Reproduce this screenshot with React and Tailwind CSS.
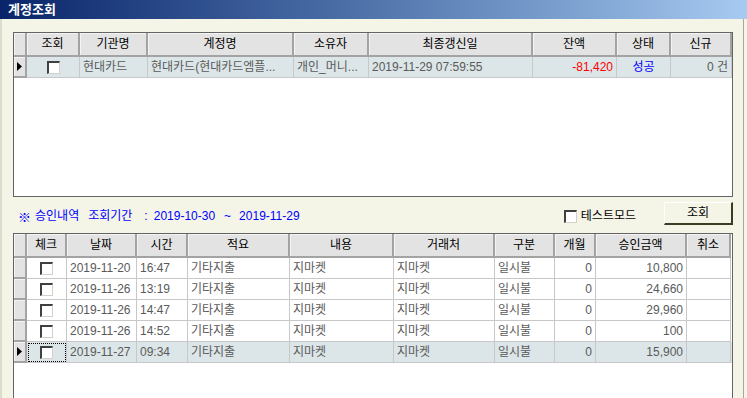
import React from 'react'

const FONT = { fontFamily: '"Liberation Sans", "Noto Sans CJK KR", sans-serif' }

const TOP_COLS = [
  { w: 53, label: '조회', align: 'center' },
  { w: 68, label: '기관명', align: 'left' },
  { w: 146, label: '계정명', align: 'left' },
  { w: 75, label: '소유자', align: 'left' },
  { w: 164, label: '최종갱신일', align: 'left' },
  { w: 84, label: '잔액', align: 'right' },
  { w: 54, label: '상태', align: 'center' },
  { w: 61, label: '신규', align: 'right' },
]

const BOTTOM_COLS = [
  { w: 40, label: '체크', align: 'center' },
  { w: 70, label: '날짜', align: 'left' },
  { w: 51, label: '시간', align: 'left' },
  { w: 102, label: '적요', align: 'left' },
  { w: 104, label: '내용', align: 'left' },
  { w: 101, label: '거래처', align: 'left' },
  { w: 60, label: '구분', align: 'left' },
  { w: 41, label: '개월', align: 'right' },
  { w: 91, label: '승인금액', align: 'right' },
  { w: 44, label: '취소', align: 'left' },
]

const ROWS = [
  ['2019-11-20', '16:47', '기타지출', '지마켓', '지마켓', '일시불', '0', '10,800', ''],
  ['2019-11-26', '13:19', '기타지출', '지마켓', '지마켓', '일시불', '0', '24,660', ''],
  ['2019-11-26', '14:47', '기타지출', '지마켓', '지마켓', '일시불', '0', '29,960', ''],
  ['2019-11-26', '14:52', '기타지출', '지마켓', '지마켓', '일시불', '0', '100', ''],
  ['2019-11-27', '09:34', '기타지출', '지마켓', '지마켓', '일시불', '0', '15,900', ''],
]

const ALIGN = {
  left: 'justify-start pl-[3px]',
  right: 'justify-end pr-[3px]',
  center: 'justify-center',
}

// ── 공통 셀 ───────────────────────────────────────────

function CheckBox() {
  return (
    <span className="block w-[13px] h-[13px] bg-white border-t-2 border-l-2 border-t-[#404040] border-l-[#404040] border-b border-r border-b-[#d4d0c8] border-r-[#d4d0c8]" />
  )
}

function Arrow() {
  return (
    <svg width="5" height="9" viewBox="0 0 5 9" className="ml-[3px]">
      <path d="M0 0 L5 4.5 L0 9 Z" fill="#000" />
    </svg>
  )
}

function HeaderCell({ w, children }) {
  return (
    <div
      className="h-[24px] shrink-0 flex items-center justify-center bg-[#e3e3e3] border-r-2 border-b-2 border-[#a3a3a3] shadow-[inset_1px_1px_0_#f4f4f4] text-black"
      style={{ width: w }}
    >
      {children}
    </div>
  )
}

function RowHeader({ current }) {
  return (
    <div className="w-[13px] h-[21px] shrink-0 flex items-center bg-[#e3e3e3] border-r-2 border-b-2 border-[#a3a3a3] shadow-[inset_1px_1px_0_#f4f4f4]">
      {current && <Arrow />}
    </div>
  )
}

function Cell({ w, align, children, className = '', focus }) {
  return (
    <div
      className={`h-[21px] shrink-0 flex items-center overflow-hidden whitespace-nowrap border-r border-b border-[#c8c8c8] ${ALIGN[align]} ${className} ${focus ? 'outline-1 outline-dotted outline-black -outline-offset-2' : ''}`}
      style={{ width: w }}
    >
      {children}
    </div>
  )
}

// ── 계정 그리드 ───────────────────────────────────────

function AccountGrid() {
  const row = [
    <CheckBox />,
    '현대카드',
    '현대카드(현대카드엠플...',
    '개인_머니...',
    '2019-11-29 07:59:55',
    <span className="text-[#ff0000]">-81,420</span>,
    <span className="text-[#0000ff]">성공</span>,
    '0 건',
  ]
  return (
    <div className="w-[720px] h-[165px] border border-[#646464] bg-white overflow-hidden">
      <div className="flex">
        <HeaderCell w={13} />
        {TOP_COLS.map((c) => (
          <HeaderCell key={c.label} w={c.w}>{c.label}</HeaderCell>
        ))}
      </div>
      <div className="flex bg-[#dce6e8] text-[#5a5a5a]">
        <RowHeader current />
        {TOP_COLS.map((c, i) => (
          <Cell key={c.label} w={c.w} align={c.align}>{row[i]}</Cell>
        ))}
      </div>
    </div>
  )
}

// ── 승인내역 그리드 ───────────────────────────────────

function ApprovalGrid() {
  return (
    <div className="w-[720px] h-[170px] border-l border-t border-r border-[#646464] bg-white overflow-hidden">
      <div className="flex">
        <HeaderCell w={13} />
        {BOTTOM_COLS.map((c) => (
          <HeaderCell key={c.label} w={c.w}>{c.label}</HeaderCell>
        ))}
      </div>
      {ROWS.map((r, ri) => {
        const last = ri === ROWS.length - 1
        return (
          <div key={ri} className={`flex text-[#5a5a5a] ${last ? 'bg-[#dce6e8]' : 'bg-white'}`}>
            <RowHeader current={last} />
            {BOTTOM_COLS.map((c, i) => (
              <Cell key={c.label} w={c.w} align={c.align} focus={last && i === 0}>
                {i === 0 ? <CheckBox /> : r[i - 1]}
              </Cell>
            ))}
          </div>
        )
      })}
    </div>
  )
}

export default function App() {
  return (
    <div className="w-[747px] h-[398px] overflow-hidden bg-[#f4f5e7] text-[12px] leading-none" style={FONT}>
      {/* 타이틀 바 */}
      <div className="h-[19px] flex items-center pl-[8px] bg-gradient-to-r from-[#0a246a] to-[#a6caf0]">
        <span className="text-white font-bold text-[13px]">계정조회</span>
      </div>

      {/* 본문 */}
      <div className="w-[744px] h-[379px] border-l-2 border-r border-l-[#dcdccb] border-r-[#a8a89a] pl-[11px] pt-[13px]">
        <AccountGrid />

        <div className="w-[720px] h-[36px] flex items-center">
          <div className="flex items-center pl-[5px] pt-[2px] text-[#0000ff]">
            <span className="text-[13px]" style={{ fontFamily: '"Noto Sans CJK KR", sans-serif' }}>※</span>
            <span className="ml-[4px]">승인내역</span>
            <span className="ml-[9px]">조회기간</span>
            <span className="ml-[12px]">:</span>
            <span className="ml-[6px]">2019-10-30</span>
            <span className="ml-[9px]">~</span>
            <span className="ml-[8px]">2019-11-29</span>
          </div>
          <label className="ml-auto flex items-center gap-[4px] pt-[2px]">
            <CheckBox />
            <span className="text-black font-normal">테스트모드</span>
          </label>
          <button className="ml-[28px] w-[69px] h-[23px] mb-[4px] bg-[#f4f5e7] border-t border-l border-white border-r-2 border-b-2 border-r-[#3c3c24] border-b-[#3c3c24] text-black">
            조회
          </button>
        </div>

        <ApprovalGrid />
      </div>
    </div>
  )
}
